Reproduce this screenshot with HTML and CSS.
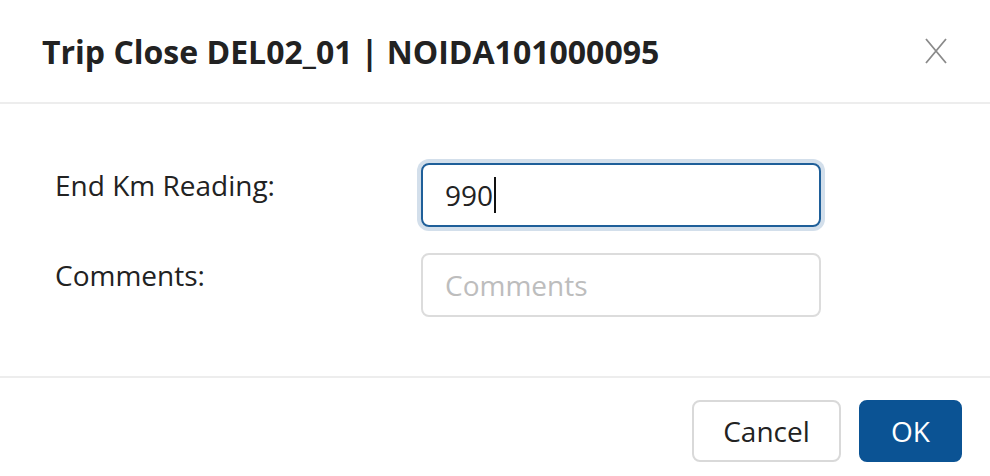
FILE: index.html
```html
<!DOCTYPE html>
<html>
  <head>
    <meta charset="utf-8" />
    <link rel="stylesheet" href="styles.css">
  </head>
  <body>
    <div class="modal">
      <div class="modal-header">
        <h4 class="modal-title">Trip Close DEL02_01 | NOIDA101000095</h4>
        <button class="close" aria-label="Close">
          <svg width="24" height="26" viewBox="0 0 24 26">
            <path d="M2 1 L22 25 M22 1 L2 25" stroke="#8a8a8a" stroke-width="1.8" fill="none" />
          </svg>
        </button>
      </div>

      <div class="modal-body">
        <div class="form-row">
          <label class="control-label">End Km Reading:</label>
          <div class="control focused">
            <span class="value">990</span><span class="caret"></span>
          </div>
        </div>
        <div class="form-row">
          <label class="control-label">Comments:</label>
          <div class="control">
            <span class="placeholder">Comments</span>
          </div>
        </div>
      </div>

      <div class="modal-footer">
        <button class="btn btn-default">Cancel</button>
        <button class="btn btn-primary">OK</button>
      </div>
    </div>
  </body>
</html>
```

FILE: styles.css
```css
body {
  margin: 0;
  background: #ffffff;
  color: #222222;
  font-family: "Open Sans", sans-serif;
}
.modal {
  width: 990px;
}
.modal-header {
  display: flex;
  justify-content: space-between;
  align-items: center;
  height: 104px;
  padding: 0 42px 0 42px;
  box-sizing: border-box;
  border-bottom: 2px solid #ededed;
}
.modal-title {
  margin: 0;
  font-size: 32px;
  font-weight: 700;
  color: #222222;
}
.close {
  border: none;
  background: none;
  padding: 0;
  display: flex;
}
.modal-body {
  height: 274px;
  padding: 59px 0 0 55px;
  box-sizing: border-box;
  border-bottom: 2px solid #ededed;
}
.form-row {
  display: flex;
  margin-bottom: 26px;
}
.control-label {
  width: 366px;
  padding-top: 4px;
  font-size: 28px;
  line-height: 36px;
  color: #222222;
}
.control {
  width: 400px;
  height: 64px;
  box-sizing: border-box;
  border: 2px solid #dcdcdc;
  border-radius: 8px;
  padding: 0 22px;
  display: flex;
  align-items: center;
  font-size: 28px;
}
.control.focused {
  border-color: #1f5f99;
  box-shadow: 0 0 0 4px #d3dfeb;
}
.value {
  color: #222222;
}
.caret {
  display: inline-block;
  width: 2px;
  height: 36px;
  background: #111111;
  margin-left: 1px;
}
.placeholder {
  color: #bdbdbd;
}
.modal-footer {
  display: flex;
  justify-content: flex-end;
  gap: 18px;
  padding: 22px 28px 0 0;
}
.btn {
  height: 62px;
  padding: 0;
  border-radius: 8px;
  font-family: "Open Sans", sans-serif;
  font-size: 28px;
}
.btn-default {
  background: #ffffff;
  border: 2px solid #d9d9d9;
  color: #222222;
  width: 149px;
}
.btn-primary {
  background: #0b5394;
  border: 2px solid #0b5394;
  color: #ffffff;
  width: 103px;
}
```
